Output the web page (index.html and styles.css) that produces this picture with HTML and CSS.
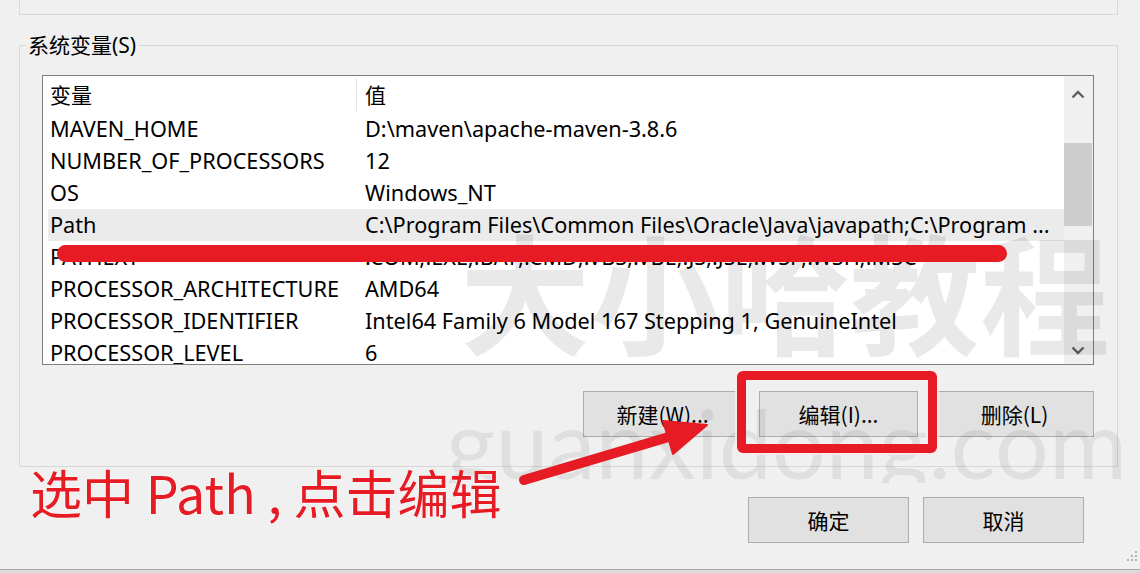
FILE: index.html
```html
<!DOCTYPE html>
<html lang="zh-CN">
<head>
<meta charset="UTF-8">
<title>环境变量</title>
<link rel="stylesheet" href="styles.css">
</head>
<body>
<div class="prev-group"></div>
<fieldset class="group">
    <legend>系统变量(S)</legend>
    <div class="list">
        <div class="list-body">
            <table class="vars">
                <thead>
                    <tr><th class="c1">变量</th><th class="c2">值</th></tr>
                </thead>
                <tbody>
                    <tr><td>MAVEN_HOME</td><td>D:\maven\apache-maven-3.8.6</td></tr>
                    <tr><td>NUMBER_OF_PROCESSORS</td><td>12</td></tr>
                    <tr><td>OS</td><td>Windows_NT</td></tr>
                    <tr class="sel"><td>Path</td><td>C:\Program Files\Common Files\Oracle\Java\javapath;C:\Program ...</td></tr>
                    <tr><td>PATHEXT</td><td>.COM;.EXE;.BAT;.CMD;.VBS;.VBE;.JS;.JSE;.WSF;.WSH;.MSC</td></tr>
                    <tr><td>PROCESSOR_ARCHITECTURE</td><td>AMD64</td></tr>
                    <tr><td>PROCESSOR_IDENTIFIER</td><td>Intel64 Family 6 Model 167 Stepping 1, GenuineIntel</td></tr>
                    <tr><td>PROCESSOR_LEVEL</td><td>6</td></tr>
                </tbody>
            </table>
        </div>
        <div class="vscroll">
            <div class="sb-btn sb-up">
                <svg width="14" height="9" viewBox="0 0 14 9"><path d="M1.5 7.5 L7 2 L12.5 7.5" fill="none" stroke="#606060" stroke-width="2.4"/></svg>
            </div>
            <div class="sb-track"><div class="sb-thumb"></div></div>
            <div class="sb-btn sb-down">
                <svg width="14" height="9" viewBox="0 0 14 9"><path d="M1.5 1.5 L7 7 L12.5 1.5" fill="none" stroke="#606060" stroke-width="2.4"/></svg>
            </div>
        </div>
    </div>
    <div class="btns">
        <button class="btn">新建(W)...</button>
        <button class="btn">编辑(I)...</button>
        <button class="btn">删除(L)</button>
    </div>
</fieldset>
<div class="btns-main">
    <button class="btn btn-wide">确定</button>
    <button class="btn btn-wide">取消</button>
</div>
<div class="next-win"></div>

<!-- 右下角拖动手柄 -->
<svg class="grip" width="12" height="12" viewBox="0 0 12 12">
    <rect x="9" y="1" width="2" height="2" fill="#b4b4b4"/>
    <rect x="5" y="5" width="2" height="2" fill="#b4b4b4"/>
    <rect x="9" y="5" width="2" height="2" fill="#b4b4b4"/>
    <rect x="1" y="9" width="2" height="2" fill="#b4b4b4"/>
    <rect x="5" y="9" width="2" height="2" fill="#b4b4b4"/>
    <rect x="9" y="9" width="2" height="2" fill="#b4b4b4"/>
</svg>

<!-- 水印 -->
<div class="wm wm-cn">大小哈教程</div>
<div class="wm wm-en">guanxidong.com</div>

<!-- 标注 -->
<div class="strike"></div>
<div class="mark-box"></div>
<svg class="arrow" width="220" height="90" viewBox="505 400 220 90">
    <line x1="524" y1="480" x2="672" y2="436" stroke="#e61b24" stroke-width="10" stroke-linecap="round"/>
    <polygon points="707,425 663,421 673,454" fill="#e61b24" stroke="#e61b24" stroke-width="2" stroke-linejoin="round"/>
</svg>
<div class="note">选中 Path , 点击编辑</div>
</body>
</html>
```

FILE: styles.css
```css
*{
    margin:0;
    padding:0;
    box-sizing:border-box;
}
html,body{
    width:1140px;
    height:573px;
    overflow:hidden;
}
body{
    position:relative;
    background:#f0f0f0;
    font-family:"Noto Sans","Noto Sans CJK SC",sans-serif;
    font-size:21px;
    color:#000;
}
/*上一个分组框的底边*/
.prev-group{
    height:15px;
    margin:0 22px 0 19px;
    border:1px solid #d8d8d8;
    border-top:none;
}
.group{
    margin:17px 22px 0 19px;
    border:1px solid #d8d8d8;
    padding:17px 0 29px 6px;
    min-width:0;
}
.group legend{
    padding:0 2px;
    line-height:26px;
    font-size:21px;
}
.list{
    display:flex;
    width:1052px;
    height:290px;
    margin-left:16px;
    border:1px solid #7f7f7f;
    background:#fff;
}
.list-body{
    flex:1;
    padding-left:5px;
    overflow:hidden;
}
.vars{
    width:1016px;
    border-collapse:collapse;
    table-layout:fixed;
    font-size:21.7px;
}
.vars th,
.vars td{
    text-align:left;
    font-weight:normal;
    white-space:nowrap;
    overflow:hidden;
}
.vars th{
    height:37px;
    line-height:37px;
    font-size:21px;
    font-family:"Noto Sans CJK SC",sans-serif;
}
.vars td{
    height:32px;
    line-height:32px;
}
.vars .c1{
    width:309px;
    position:relative;
}
.vars .c1::after{
    content:"";
    position:absolute;
    right:0;
    top:2px;
    bottom:2px;
    width:1px;
    background:#e3e3e3;
}
.vars th,
.vars td:first-child{
    padding-left:2px;
}
.vars th.c2,
.vars td:last-child{
    padding-left:8px;
}
.vars .sel td{
    background:#ebebeb;
}
/*滚动条*/
.vscroll{
    width:29px;
    display:flex;
    flex-direction:column;
    background:#f0f0f0;
}
.sb-btn{
    display:flex;
    align-items:center;
    justify-content:center;
    padding-right:1px;
}
.sb-up{
    height:37px;
}
.sb-down{
    height:28px;
}
.sb-track{
    flex:1;
}
.sb-thumb{
    width:28px;
    height:83px;
    margin-top:30px;
    background:#cdcdcd;
}
/*按钮*/
.btns{
    display:flex;
    justify-content:flex-end;
    gap:17px;
    width:1052px;
    margin:26px 0 0 16px;
}
.btn{
    width:159px;
    height:46px;
    background:#e1e1e1;
    border:1px solid #adadad;
    font-family:"Noto Sans CJK SC",sans-serif;
    font-size:21px;
    color:#000;
}
.btns-main{
    display:flex;
    justify-content:flex-end;
    gap:14px;
    margin:30px 56px 0 0;
}
.btn-wide{
    width:161px;
}
.next-win{
    height:10px;
    margin-top:26px;
    border-top:1px solid #a9a9a9;
    background:#dcdcdc;
}
.grip{
    position:absolute;
    left:1126px;
    top:550px;
}
/*水印*/
.wm{
    position:absolute;
    white-space:nowrap;
    line-height:1;
    pointer-events:none;
}
.wm-cn{
    left:460px;
    top:223px;
    font-family:"Noto Sans CJK SC",sans-serif;
    font-weight:700;
    font-size:130px;
    color:rgba(0,0,0,0.085);
}
.wm-en{
    left:446px;
    top:385px;
    height:98px;
    overflow:hidden;
    font-family:Lato,sans-serif;
    font-size:95px;
    line-height:1.2;
    color:rgba(0,0,0,0.07);
}
/*红色标注*/
.strike{
    position:absolute;
    left:57px;
    top:245px;
    width:950px;
    height:17px;
    border-radius:9px;
    background:#e61b24;
}
.mark-box{
    position:absolute;
    left:737px;
    top:371px;
    width:200px;
    height:82px;
    border:9px solid #e61b24;
    border-radius:6px;
    box-shadow:0 0 0 2px rgba(255,235,235,0.8);
}
.arrow{
    position:absolute;
    left:505px;
    top:400px;
}
.note{
    position:absolute;
    left:30px;
    top:466px;
    font-family:"Noto Sans CJK SC",sans-serif;
    font-size:52px;
    line-height:1;
    white-space:pre;
    color:#e61b24;
    text-shadow:0 0 2px #fff,0 0 1px #fff;
}
```
